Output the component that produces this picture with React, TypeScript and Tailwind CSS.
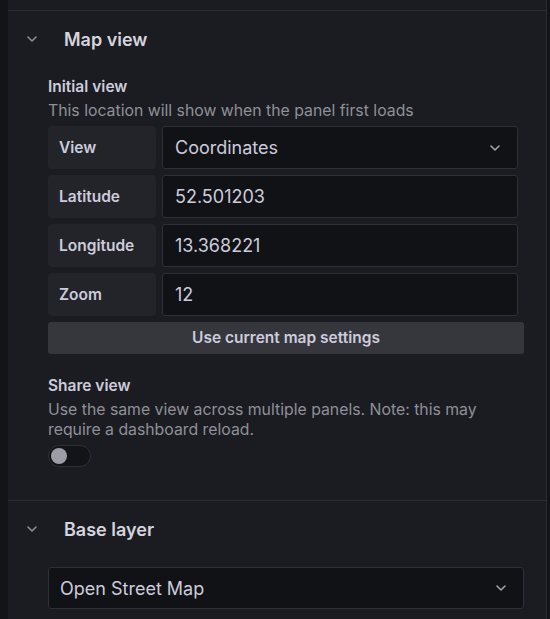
import React from "react";

const Chevron = ({ className = "" }: { className?: string }) => (
  <svg width="10" height="6" viewBox="0 0 10 6" fill="none" className={className}>
    <path d="M1 1l4 4 4-4" stroke="currentColor" strokeWidth="1.6" strokeLinecap="round" strokeLinejoin="round" />
  </svg>
);

const Row = ({ label, value, select }: { label: string; value: string; select?: boolean }) => (
  <div className="flex h-[43px] gap-[6px] pr-[6px]">
    <div className="flex w-[108px] shrink-0 items-center rounded-[4px] bg-[#232429] pl-[11px] text-[15.5px] font-semibold text-[#ccccdc]">
      {label}
    </div>
    <div className="flex flex-1 items-center justify-between rounded-[3px] border border-[#2f3036] bg-[#111216] pl-[12px] pr-[17px] text-[18px] text-[#ccccdc]">
      <span>{value}</span>
      {select && <Chevron className="text-[#a2a3ab]" />}
    </div>
  </div>
);

export default function App() {
  return (
    <div
      className="flex h-[619px] w-[550px] overflow-hidden bg-[#131418]"
      style={{ fontFamily: "Inter, 'Noto Sans', sans-serif" }}
    >
      <div className="w-[8px] shrink-0 bg-[#131418]" />
      <div className="flex w-[539px] shrink-0 flex-col border-r border-[#2a2b30] bg-[#1b1c21]">
        <div className="h-[11px] shrink-0 border-b border-[#2a2b30]" />
        {/* Map view */}
        <div className="flex flex-col border-b border-[#2a2b30] pb-[33px]">
          <div className="flex h-[56px] items-center pl-[19px]">
            <Chevron className="text-[#8d8e96]" />
            <span className="ml-[27px] text-[18px] font-semibold text-[#d4d5de]">Map view</span>
          </div>
          <div className="flex flex-col pl-[40px] pr-[22px] pt-[10px]">
            <div className="text-[15.5px] font-semibold leading-[20px] text-[#ccccdc]">Initial view</div>
            <div className="mt-[4px] text-[15.8px] leading-[20px] text-[#8f9099]">
              This location will show when the panel first loads
            </div>
            <div className="mt-[5px] flex flex-col gap-[6px]">
              <Row label="View" value="Coordinates" select />
              <Row label="Latitude" value="52.501203" />
              <Row label="Longitude" value="13.368221" />
              <Row label="Zoom" value="12" />
              <button className="flex h-[32px] items-center justify-center rounded-[3px] bg-[#36373d] text-[15.5px] font-semibold text-[#ccccdc]">
                Use current map settings
              </button>
            </div>
            <div className="mt-[22px] text-[15.5px] font-semibold leading-[20px] text-[#ccccdc]">Share view</div>
            <div className="mt-[4px] text-[15.8px] leading-[20px] text-[#8f9099]">
              Use the same view across multiple panels. Note: this may require a dashboard reload.
            </div>
            <div className="mt-[5px] flex h-[22px] w-[43px] items-center rounded-full border border-[#2f3036] bg-[#131418] pl-[2px]">
              <div className="h-[16px] w-[16px] rounded-full bg-[#9c9da5]" />
            </div>
          </div>
        </div>
        {/* Base layer */}
        <div className="flex flex-col">
          <div className="flex h-[56px] items-center pl-[19px]">
            <Chevron className="text-[#8d8e96]" />
            <span className="ml-[27px] text-[18px] font-semibold text-[#d4d5de]">Base layer</span>
          </div>
          <div className="flex flex-col pl-[40px] pr-[22px] pt-[10px]">
            <div className="flex h-[42px] items-center justify-between rounded-[3px] border border-[#2f3036] bg-[#111216] pl-[11px] pr-[17px] text-[18px] text-[#ccccdc]">
              <span>Open Street Map</span>
              <Chevron className="text-[#a2a3ab]" />
            </div>
          </div>
        </div>
      </div>
      <div className="flex-1 bg-[#131418]" />
    </div>
  );
}
